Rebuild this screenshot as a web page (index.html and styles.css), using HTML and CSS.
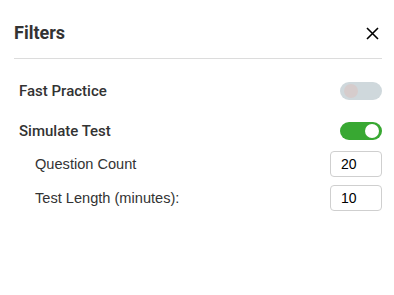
FILE: index.html
```html
<!DOCTYPE html>
<html>
<head>
<meta charset="utf-8">
<link rel="stylesheet" href="styles.css">
</head>
<body>
<div class="panel">
  <div class="header">
    <h2 class="title">Filters</h2>
    <button class="close" aria-label="Close">
      <svg width="13" height="13" viewBox="0 0 13 13"><path d="M1 1L12 12M12 1L1 12" stroke="#000" stroke-width="1.6" fill="none"/></svg>
    </button>
  </div>
  <div class="body">
    <div class="row">
      <span class="label">Fast Practice</span>
      <span class="toggle off"><span class="knob"></span></span>
    </div>
    <div class="row">
      <span class="label">Simulate Test</span>
      <span class="toggle on"><span class="knob"></span></span>
    </div>
    <div class="subrows">
      <div class="subrow">
        <span class="sublabel">Question Count</span>
        <input class="num" type="text" value="20">
      </div>
      <div class="subrow">
        <span class="sublabel">Test Length (minutes):</span>
        <input class="num" type="text" value="10">
      </div>
    </div>
  </div>
</div>
</body>
</html>
```
FILE: styles.css
```css
html, body {
  margin: 0;
  background: #fff;
}
.panel {
  padding: 14px 12px 0 14px;
  font-family: Roboto, "Liberation Sans", sans-serif;
  color: #333;
}
.header {
  display: flex;
  justify-content: space-between;
  align-items: center;
  padding: 8px 0 14px 0;
  border-bottom: 1px solid #dcdcdc;
}
.title {
  margin: 0;
  font-size: 18px;
  line-height: 22px;
  font-weight: 700;
  color: #333;
}
.close {
  width: 20px;
  height: 20px;
  padding: 0;
  border: 0;
  background: none;
  display: flex;
  align-items: center;
  justify-content: center;
}
.body {
  padding-top: 12px;
}
.row {
  height: 40px;
  display: flex;
  align-items: center;
  justify-content: space-between;
  padding-left: 5px;
}
.label {
  font-size: 15px;
  font-weight: 500;
  color: #333;
}
.toggle {
  position: relative;
  width: 42px;
  height: 18px;
  border-radius: 9px;
  display: block;
}
.toggle.off { background: #cfd8dc; }
.toggle.on { background: #38a832; }
.knob {
  position: absolute;
  top: 2px;
  width: 14px;
  height: 14px;
  border-radius: 50%;
}
.toggle.off .knob { left: 4px; background: #d6cccc; }
.toggle.on .knob { right: 3px; background: #fff; }
.subrows {
  display: flex;
  flex-direction: column;
  gap: 8px;
  padding: 0 0 0 21px;
}
.subrow {
  display: flex;
  align-items: center;
  justify-content: space-between;
}
.sublabel {
  font-family: "Liberation Sans", Arial, sans-serif;
  font-size: 14.6px;
  color: #333;
}
.num {
  box-sizing: border-box;
  width: 52px;
  height: 26px;
  border: 1px solid #cfcfcf;
  border-radius: 4px;
  padding: 0 0 0 10px;
  font-family: "Liberation Sans", Arial, sans-serif;
  font-size: 14px;
  color: #000;
  outline: none;
}
```
